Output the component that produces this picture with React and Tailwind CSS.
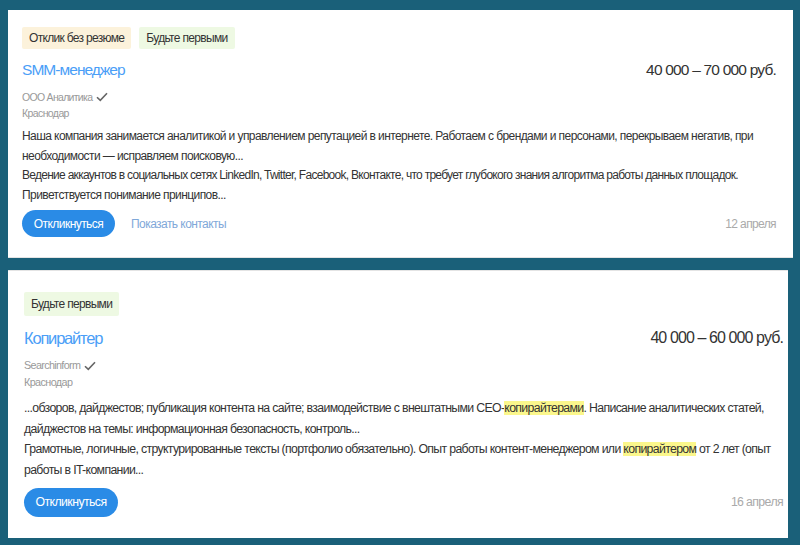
import React from 'react'

const font = { fontFamily: '"Liberation Sans", Arial, sans-serif' }

function Check() {
  return (
    <svg width="12" height="10" viewBox="0 0 12 10" className="ml-[4px] inline-block">
      <path d="M1 5.2 L4.3 8.4 L11 1.2" fill="none" stroke="#666" strokeWidth="1.6" />
    </svg>
  )
}

function Tag({ children, tone }) {
  return (
    <span className={`inline-flex items-center rounded-[2px] px-[7px] text-[12px] tracking-[-0.68px] text-[#333] ${tone}`}>
      {children}
    </span>
  )
}

function Mark({ children }) {
  return <span className="bg-[#fbf78c]">{children}</span>
}

export default function App() {
  return (
    <main style={font} className="flex h-[545px] w-[800px] flex-col gap-[12px] bg-[#1a6079] pl-[8px] pt-[10px]">
      <section className="flex h-[248px] w-[785px] flex-col border-b border-[#e4e4e4] bg-white pl-[14px] pr-[17px] pt-[17px]">
        <div className="flex gap-[8px]">
          <Tag tone="h-[22px] bg-[#fcf2db]">Отклик без резюме</Tag>
          <Tag tone="h-[22px] bg-[#eef9e3]">Будьте первыми</Tag>
        </div>
        <div className="mt-[11px] flex items-center justify-between">
          <a className="text-[15.5px] leading-[20px] tracking-[-0.95px] text-[#4a9ef7]">SMM-менеджер</a>
          <span className="text-[15.5px] leading-[20px] tracking-[-0.8px] text-[#333]">40 000 – 70 000 руб.</span>
        </div>
        <div className="mt-[9px] flex items-center text-[10.5px] leading-[16px] tracking-[-0.7px] text-[#999]">
          ООО Аналитика <Check />
        </div>
        <div className="text-[10.5px] leading-[16px] tracking-[-0.6px] text-[#999]">Краснодар</div>
        <p className="mt-[6px] whitespace-nowrap text-[12px] leading-[19.6px] tracking-[-0.58px] text-[#333]">
          Наша компания занимается аналитикой и управлением репутацией в интернете. Работаем с брендами и персонами, перекрываем негатив, при
          <br />
          необходимости — исправляем поисковую...
          <br />
          <span className="tracking-[-0.72px]">
            Ведение аккаунтов в социальных сетях LinkedIn, Twitter, Facebook, Вконтакте, что требует глубокого знания алгоритма работы данных площадок.
          </span>
          <br />
          Приветствуется понимание принципов...
        </p>
        <div className="mt-[5px] flex items-center text-[12px] tracking-[-0.56px]">
          <button className="h-[27px] w-[93px] rounded-full bg-[#2a8be6] text-white">Откликнуться</button>
          <a className="ml-[16px] text-[#7fa8d9]">Показать контакты</a>
          <span className="ml-auto tracking-[-0.62px] text-[#aaa]">12 апреля</span>
        </div>
      </section>

      <section className="flex h-[268px] w-[780px] flex-col border-t border-[#e4e4e4] bg-white pl-[16px] pr-[5px] pt-[21px]">
        <div className="flex">
          <Tag tone="h-[24px] bg-[#eef9e3]">Будьте первыми</Tag>
        </div>
        <div className="mt-[11px] flex items-center justify-between">
          <a className="text-[16.5px] leading-[22px] tracking-[-1.2px] text-[#4a9ef7]">Копирайтер</a>
          <span className="text-[16px] leading-[22px] tracking-[-0.9px] text-[#333]">40 000 – 60 000 руб.</span>
        </div>
        <div className="mt-[8px] flex items-center text-[10.8px] leading-[17px] tracking-[-0.66px] text-[#999]">
          Searchinform <Check />
        </div>
        <div className="text-[10.8px] leading-[17px] tracking-[-0.6px] text-[#999]">Краснодар</div>
        <p className="mt-[7px] whitespace-nowrap text-[12.3px] leading-[20.7px] tracking-[-0.66px] text-[#333]">
          ...обзоров, дайджестов; публикация контента на сайте; взаимодействие с внештатными СЕО-<Mark>копирайтерами</Mark>. Написание аналитических статей,
          <br />
          дайджестов на темы: информационная безопасность, контроль...
          <br />
          Грамотные, логичные, структурированные тексты (портфолио обязательно). Опыт работы контент-менеджером или <Mark>копирайтером</Mark> от 2 лет (опыт
          <br />
          работы в IT-компании...
        </p>
        <div className="mt-[7px] flex items-center text-[12.3px] tracking-[-0.58px]">
          <button className="h-[29px] w-[94px] rounded-full bg-[#2a8be6] text-white">Откликнуться</button>
          <span className="ml-auto tracking-[-0.62px] text-[#aaa]">16 апреля</span>
        </div>
      </section>
    </main>
  )
}
